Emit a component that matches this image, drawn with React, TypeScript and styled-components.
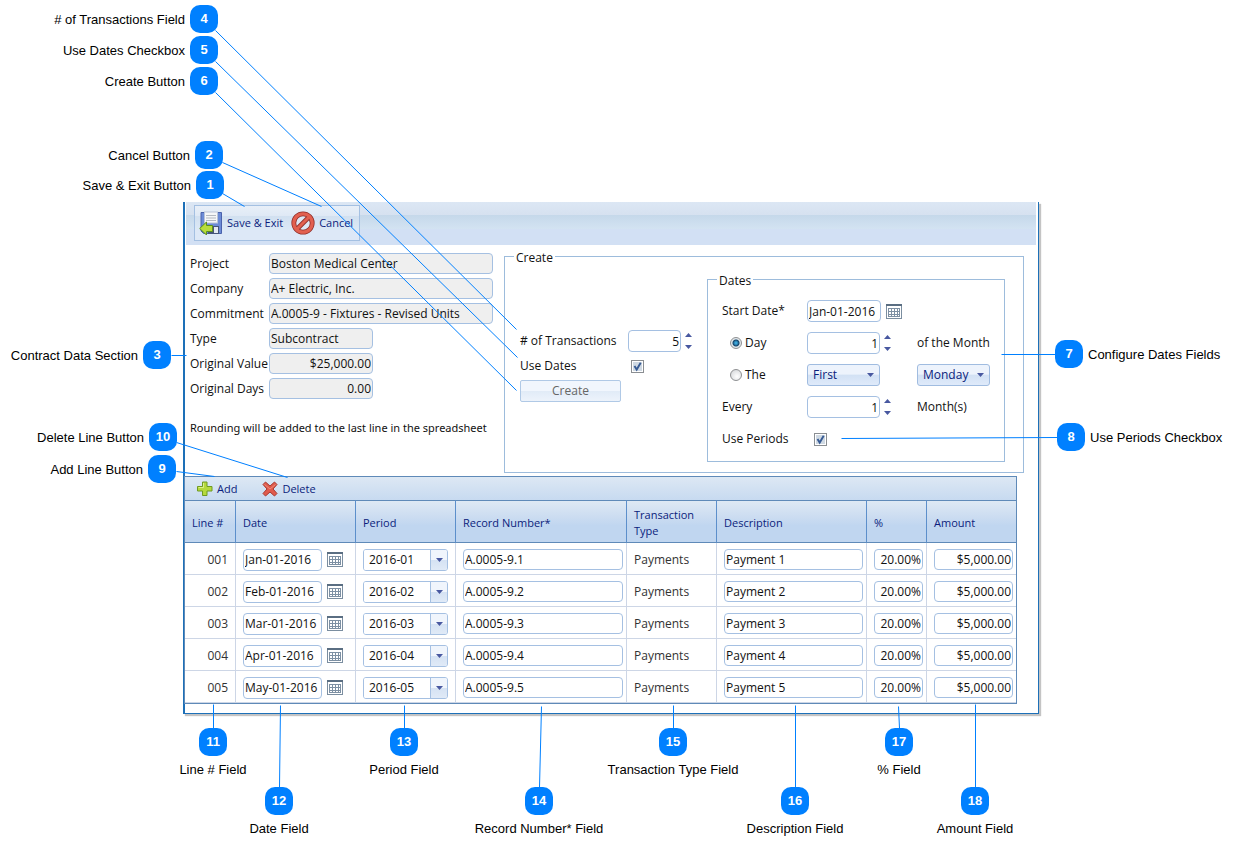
import React from "react";
import styled, { createGlobalStyle, css } from "styled-components";

const GlobalStyle = createGlobalStyle`
  *, *::before, *::after { box-sizing: border-box; }
  body {
    margin: 0;
    background: #fff;
    color: #111;
    font: 12px/16px "Open Sans", "Noto Sans", sans-serif;
  }
  button, input, select { font: inherit; color: inherit; margin: 0; }
`;

const Figure = styled.main`
  position: relative;
  max-width: 1240px;
  padding: 202px 193px 132px 183px;
`;

const Dialog = styled.section`
  padding: 0 2px 9px 0;
  border: solid #1d70b8;
  border-width: 0 1px 1px 2px;
  box-shadow: 2px 2px 1px #c4c4c4;
  margin-right: 1px;
`;

const CommandBar = styled.header`
  display: flex;
  height: 43px;
  margin-left: 1px;
  padding: 3px 8px;
  background: linear-gradient(#dce7f4 0, #d6e1f0 13px, #c5d8ea 13px, #d3e3f2 27px, #d2e0f4 27px);
`;

const CommandGroup = styled.div`
  display: flex;
  align-items: center;
  height: 36px;
  padding: 0 6px 0 4px;
  gap: 8px;
  border: 1px solid #a4c0e2;
  background: linear-gradient(#e8eff8 0, #dfe9f5 10px, #d1e0f0 10px, #dce9f6 24px, #dde8f7 24px);
`;

const ToolButton = styled.button`
  display: flex;
  align-items: center;
  gap: 4px;
  padding: 0;
  border: 0;
  background: none;
  color: #0b1d7c;
  font-size: 11px;
  white-space: nowrap;
`;

const Body = styled.div`
  display: flex;
  align-items: flex-start;
  padding: 2px 12px 3px 5px;
`;

const ContractData = styled.div`
  flex: 0 0 314px;
  min-width: 0;
  padding-top: 6px;
`;

const DataGrid = styled.div`
  display: grid;
  grid-template-columns: 79px 1fr;
  grid-auto-rows: 21px;
  row-gap: 4px;
  align-items: center;
  padding-right: 11px;
`;

const TextLabel = styled.label`
  white-space: nowrap;
`;

const Field = styled.input<{ $w?: number; $right?: boolean; $tall?: boolean }>`
  display: block;
  width: ${(p) => (p.$w ? `${p.$w}px` : "100%")};
  height: ${(p) => (p.$tall ? 22 : 21)}px;
  padding: 0 1px;
  border: 1px solid #a5c0e2;
  border-radius: 4px;
  background: #fff;
  outline: 0;
  text-align: ${(p) => (p.$right ? "right" : "left")};
  &:read-only { background: #efefef; }
`;

const Note = styled.p`
  margin: 21px 0 0;
  font-family: "Noto Sans", sans-serif;
  font-size: 11px;
  white-space: nowrap;
`;

const Group = styled.fieldset`
  min-width: 0;
  margin: 0;
  padding: 0;
  border: 1px solid #9dbcdc;
`;

const Legend = styled.legend`
  margin-left: 9px;
  padding: 4px 2px 0;
  line-height: 14px;
`;

const CreateGroup = styled(Group)`
  flex: 1;
  height: 226px;
`;

const CreateContent = styled.div`
  display: flex;
  align-items: flex-start;
  justify-content: space-between;
  padding: 5px 18px 0 15px;
`;

const CreateForm = styled.div`
  display: grid;
  grid-template-columns: 108px auto;
  grid-template-rows: 22px 28px 22px;
  align-items: center;
  padding-top: 60px;
`;

const DatesGroup = styled(Group)`
  width: 298px;
  height: 192px;
`;

const DatesGrid = styled.div`
  display: grid;
  grid-template-columns: 85px 110px 1fr;
  grid-auto-rows: 32px;
  align-items: center;
  padding: 7px 14px 0;
`;

const Inline = styled.div<{ $gap: number; $indent?: number }>`
  display: flex;
  align-items: center;
  gap: ${(p) => p.$gap}px;
  padding-left: ${(p) => p.$indent ?? 0}px;
`;

const Arrows = styled.span`
  display: flex;
  flex-direction: column;
  gap: 8px;
`;

const ArrowButton = styled.button`
  display: block;
  padding: 0;
  border: 0;
  background: none;
  line-height: 0;
`;

const CheckBox = styled.input`
  appearance: none;
  width: 13px;
  height: 13px;
  border: 1px solid #8a8e92;
  background: #fff
    url("data:image/svg+xml,%3Csvg xmlns='http://www.w3.org/2000/svg' viewBox='0 0 11 11'%3E%3Crect x='1' y='1' width='9' height='9' fill='%23cfd9e3'/%3E%3Cpath d='M2.5 5 L4.7 8.6 L8.7 1.8' fill='none' stroke='%23375b94' stroke-width='1.9'/%3E%3C/svg%3E");
`;

const Radio = styled.input`
  appearance: none;
  width: 12px;
  height: 12px;
  border: 1px solid #8e9092;
  border-radius: 50%;
  background: radial-gradient(circle at 60% 65%, #fff, #cfd2d5);
  &:checked {
    background: radial-gradient(circle, #3ba5d8 0 1px, #14446b 3px, #e2e7ea 4px);
  }
`;

const CreateButton = styled.button`
  grid-column: 1 / -1;
  justify-self: start;
  width: 101px;
  height: 22px;
  padding: 0;
  border: 1px solid #b0c9e6;
  border-radius: 2px;
  background: linear-gradient(#f1f6fd 48%, #e1ebf7 50%, #edf3fb);
  color: #666;
`;

const ChoiceFrame = styled.div`
  position: relative;
  display: inline-flex;
  width: 73px;
`;

const Choice = styled.select`
  appearance: none;
  width: 100%;
  height: 22px;
  padding: 0 5px;
  border: 1px solid #a0bce0;
  border-radius: 3px;
  background: linear-gradient(#edf3fc 46%, #d2e1f4 50%, #dfeafa);
  color: #0b1d7c;
`;

const ChoiceArrow = styled.span`
  position: absolute;
  right: 6px;
  top: 9px;
  line-height: 0;
  pointer-events: none;
`;

const Combo = styled.div`
  display: flex;
  width: 85px;
  height: 22px;
  border: 1px solid #a5c0e2;
  border-radius: 3px;
  overflow: hidden;
`;

const ComboText = styled.input`
  flex: 1;
  min-width: 0;
  padding: 0 5px;
  border: 0;
  outline: 0;
`;

const ComboButton = styled.button`
  display: flex;
  align-items: center;
  justify-content: center;
  width: 17px;
  padding: 0;
  border: 0;
  border-left: 1px solid #a5c0e2;
  background: linear-gradient(#f0f5fc 48%, #d5e2f3 50%, #e0eaf7);
`;

const IconButton = styled.button`
  padding: 0;
  border: 0;
  background: none;
  line-height: 0;
`;

const Panel = styled.div`
  margin: 0 19px 0 -1px;
  border: 1px solid #5f8ab8;
`;

const PanelBar = styled.div`
  display: flex;
  gap: 25px;
  height: 23px;
  padding: 0 12px;
  background: linear-gradient(#dde8f4, #c7daf0);
`;

const Table = styled.table`
  width: 100%;
  table-layout: fixed;
  border-collapse: separate;
  border-spacing: 0;
`;

const HeadCell = styled.th`
  height: 43px;
  padding: 2px 8px 0 7px;
  border-top: 1px solid #5f8ab8;
  border-bottom: 1px solid #5f8ab8;
  border-right: 1px solid #5c8fcb;
  background: linear-gradient(#dee9f4, #cbdcf1 40%, #c0d6f0 60%);
  color: #0b1d7c;
  font-size: 11px;
  font-weight: 400;
  text-align: left;
  &:last-child { border-right: 0; }
`;

const Cell = styled.td<{ $end?: boolean }>`
  height: 32px;
  padding: 2px 3px 0 7px;
  border-bottom: 1px solid #cdd6e6;
  border-right: 1px solid #cdd6e6;
  color: #333;
  ${(p) => p.$end && css`text-align: right; padding-right: 7px;`}
  &:last-child { border-right: 0; }
  input { color: #111; }
`;

const Leaders = styled.svg`
  position: absolute;
  left: 0;
  top: 0;
  width: 1233px;
  height: 846px;
  pointer-events: none;
`;

type Side = "left" | "right" | "below";

const CalloutBox = styled.div<{ $x: number; $y: number; $side: Side }>`
  position: absolute;
  left: ${(p) => p.$x}px;
  top: ${(p) => p.$y}px;
  display: flex;
  flex-direction: ${(p) => (p.$side === "left" ? "row-reverse" : p.$side === "right" ? "row" : "column")};
  align-items: center;
  gap: 5px;
  width: 28px;
  color: #000;
  font: 13px/18px "Liberation Sans", Arial, sans-serif;
  white-space: nowrap;
  span { padding-top: ${(p) => (p.$side === "below" ? 0 : 2)}px; }
`;

const Badge = styled.b`
  flex: none;
  width: 28px;
  height: 28px;
  border-radius: 10px;
  background: #0080ff;
  color: #fff;
  line-height: 28px;
  text-align: center;
`;

const callouts: [number, string, number, number, Side][] = [
  [4, "# of Transactions Field", 190, 5, "left"],
  [5, "Use Dates Checkbox", 190, 36, "left"],
  [6, "Create Button", 190, 67, "left"],
  [2, "Cancel Button", 195, 141, "left"],
  [1, "Save & Exit Button", 196, 171, "left"],
  [3, "Contract Data Section", 143, 341, "left"],
  [10, "Delete Line Button", 149, 423, "left"],
  [9, "Add Line Button", 148, 455, "left"],
  [7, "Configure Dates Fields", 1055, 340, "right"],
  [8, "Use Periods Checkbox", 1057, 423, "right"],
  [11, "Line # Field", 199, 728, "below"],
  [13, "Period Field", 390, 728, "below"],
  [15, "Transaction Type Field", 659, 728, "below"],
  [17, "% Field", 885, 728, "below"],
  [12, "Date Field", 265, 787, "below"],
  [14, "Record Number* Field", 525, 787, "below"],
  [16, "Description Field", 781, 787, "below"],
  [18, "Amount Field", 961, 787, "below"],
];

const leaders: [number, number, number, number][] = [
  [215, 30, 516, 329], [215, 61, 517, 357], [215, 92, 516, 390],
  [222, 162, 321, 206], [222, 193, 244, 206], [171, 355, 186, 355],
  [176, 442, 287, 477], [176, 471, 214, 476], [1001, 354, 1055, 354],
  [841, 438, 1057, 437], [213, 704, 213, 728], [280, 705, 279, 787],
  [404, 705, 404, 728], [541, 706, 539, 787], [673, 705, 673, 728],
  [795, 705, 795, 787], [898, 706, 899, 728], [975, 704, 975, 787],
];

const SaveIcon = () => (
  <svg width="24" height="24" viewBox="0 0 24 24" aria-hidden="true">
    <path d="M2 1.500h20.500v21H4.500L2 20z" fill="#6c8bd6" stroke="#4a62ac" />
    <rect x="5.500" y="1" width="13" height="11" fill="#f6f7f8" stroke="#b9c4d8" />
    <path d="M7 4.500h10M7 7h10M7 9.500h10" stroke="#b4b9c0" />
    <rect x="9" y="15" width="11" height="8" fill="#46557a" />
    <rect x="15" y="16" width="4" height="6" fill="#e4e9f2" />
    <path d="M0.700 17.500 7.500 11v3.500h6v6h-6V24z" fill="#b8dc3c" stroke="#5c8f1c" />
  </svg>
);

const CancelIcon = () => (
  <svg width="24" height="24" viewBox="0 0 24 24" aria-hidden="true">
    <circle cx="12" cy="12" r="9.200" fill="#dde8f5" stroke="#8e2d28" strokeWidth="4.800" />
    <path d="M5.500 18.500l13-13" stroke="#8e2d28" strokeWidth="4.600" />
    <circle cx="12" cy="12" r="9.200" fill="none" stroke="#e2604f" strokeWidth="3.200" />
    <path d="M5.500 18.500l13-13" stroke="#e2604f" strokeWidth="3" />
  </svg>
);

const AddIcon = () => (
  <svg width="16" height="16" viewBox="0 0 16 16" aria-hidden="true">
    <path d="M5.500 1h4.500v4.500h5v4.500h-5V14.500h-4.500V10H0.500v-4.500h5z" fill="#b5d93c" stroke="#6f9a22" />
    <path d="M6.500 2v4.500h-5" fill="none" stroke="#dcf08a" />
  </svg>
);

const DeleteIcon = () => (
  <svg width="16" height="16" viewBox="0 0 16 16" aria-hidden="true">
    <path d="M1 3.500 3.500 1 8 5l4.500-4L15 3.500 11 8l4 4.500-2.500 2.500L8 11l-4.500 4L1 12.500 5 8z" fill="#e05a4c" stroke="#a8392f" />
    <path d="M2.500 3.500 8 8l5.500-4.500" fill="none" stroke="#f08a78" />
  </svg>
);

const CalendarIcon = () => (
  <svg width="16" height="15" viewBox="0 0 16 15" aria-hidden="true">
    <rect x="0.500" y="0.500" width="15" height="14" fill="#fff" stroke="#7b8ea0" />
    <path d="M0 1h16" stroke="#5a6e82" strokeWidth="2" />
    <path d="M2 4.500h12M2 7.500h12M2 10.500h12M2 12.500h12M2.500 4v9M5.500 4v9M8.500 4v9M11.500 4v9M13.500 4v9" stroke="#7d90a3" />
  </svg>
);

const Triangle = ({ up = false }: { up?: boolean }) => (
  <svg width="7" height="4" viewBox="0 0 7 4" aria-hidden="true">
    <path d={up ? "M0 4h7L3.500 0z" : "M0 0h7L3.500 4z"} fill="#4858a0" />
  </svg>
);

const Spinner = ({ id, value, width }: { id: string; value: string; width: number }) => (
  <Inline $gap={4}>
    <Field id={id} $w={width} $right $tall defaultValue={value} />
    <Arrows>
      <ArrowButton aria-label="Increase"><Triangle up /></ArrowButton>
      <ArrowButton aria-label="Decrease"><Triangle /></ArrowButton>
    </Arrows>
  </Inline>
);

const DateField = ({ label, id, value, width }: { label?: string; id?: string; value: string; width: number }) => (
  <Inline $gap={5}>
    <Field id={id} aria-label={label} $w={width} $tall defaultValue={value} />
    <IconButton aria-label="Open calendar"><CalendarIcon /></IconButton>
  </Inline>
);

const DropDown = ({ label, value }: { label: string; value: string }) => (
  <ChoiceFrame>
    <Choice aria-label={label}><option>{value}</option></Choice>
    <ChoiceArrow><Triangle /></ChoiceArrow>
  </ChoiceFrame>
);

const contract = [
  { label: "Project", value: "Boston Medical Center" },
  { label: "Company", value: "A+ Electric, Inc." },
  { label: "Commitment", value: "A.0005-9 - Fixtures - Revised Units" },
  { label: "Type", value: "Subcontract", width: 104 },
  { label: "Original Value", value: "$25,000.00", width: 104, right: true },
  { label: "Original Days", value: "0.00", width: 104, right: true },
];

const columns: [string, number | undefined][] = [
  ["Line #", 51], ["Date", 120], ["Period", 100], ["Record Number*", 171],
  ["Transaction Type", 90], ["Description", undefined], ["%", 60], ["Amount", 89],
];

const months = ["Jan", "Feb", "Mar", "Apr", "May"];

export default function App() {
  return (
    <>
      <GlobalStyle />
      <Figure>
        <Dialog>
          <CommandBar>
            <CommandGroup>
              <ToolButton><SaveIcon />Save &amp; Exit</ToolButton>
              <ToolButton><CancelIcon />Cancel</ToolButton>
            </CommandGroup>
          </CommandBar>
          <Body>
            <ContractData>
              <DataGrid>
                {contract.map((f, i) => (
                  <React.Fragment key={f.label}>
                    <TextLabel htmlFor={`contract-${i}`}>{f.label}</TextLabel>
                    <Field id={`contract-${i}`} $w={f.width} $right={f.right} readOnly value={f.value} />
                  </React.Fragment>
                ))}
              </DataGrid>
              <Note>Rounding will be added to the last line in the spreadsheet</Note>
            </ContractData>
            <CreateGroup>
              <Legend>Create</Legend>
              <CreateContent>
                <CreateForm>
                  <TextLabel htmlFor="count"># of Transactions</TextLabel>
                  <Spinner id="count" value="5" width={53} />
                  <TextLabel htmlFor="use-dates">Use Dates</TextLabel>
                  <Inline $gap={0} $indent={3}>
                    <CheckBox id="use-dates" type="checkbox" defaultChecked />
                  </Inline>
                  <CreateButton disabled>Create</CreateButton>
                </CreateForm>
                <DatesGroup>
                  <Legend>Dates</Legend>
                  <DatesGrid>
                    <TextLabel htmlFor="start">Start Date*</TextLabel>
                    <DateField id="start" value="Jan-01-2016" width={74} />
                    <span />
                    <Inline $gap={3} $indent={8}>
                      <Radio id="day" type="radio" name="mode" defaultChecked />
                      <TextLabel htmlFor="day">Day</TextLabel>
                    </Inline>
                    <Spinner id="day-number" value="1" width={73} />
                    <TextLabel htmlFor="day-number">of the Month</TextLabel>
                    <Inline $gap={3} $indent={8}>
                      <Radio id="the" type="radio" name="mode" />
                      <TextLabel htmlFor="the">The</TextLabel>
                    </Inline>
                    <DropDown label="Ordinal" value="First" />
                    <DropDown label="Weekday" value="Monday" />
                    <TextLabel htmlFor="every">Every</TextLabel>
                    <Spinner id="every" value="1" width={73} />
                    <span>Month(s)</span>
                    <TextLabel htmlFor="use-periods">Use Periods</TextLabel>
                    <Inline $gap={0} $indent={7}>
                      <CheckBox id="use-periods" type="checkbox" defaultChecked />
                    </Inline>
                  </DatesGrid>
                </DatesGroup>
              </CreateContent>
            </CreateGroup>
          </Body>
          <Panel>
            <PanelBar>
              <ToolButton><AddIcon />Add</ToolButton>
              <ToolButton><DeleteIcon />Delete</ToolButton>
            </PanelBar>
            <Table>
              <colgroup>
                {columns.map(([name, width]) => <col key={name} width={width} />)}
              </colgroup>
              <thead>
                <tr>{columns.map(([name]) => <HeadCell key={name}>{name}</HeadCell>)}</tr>
              </thead>
              <tbody>
                {months.map((month, i) => {
                  const n = i + 1;
                  return (
                    <tr key={month}>
                      <Cell $end>{`00${n}`}</Cell>
                      <Cell><DateField label={`Date ${n}`} value={`${month}-01-2016`} width={79} /></Cell>
                      <Cell>
                        <Combo>
                          <ComboText aria-label={`Period ${n}`} defaultValue={`2016-0${n}`} />
                          <ComboButton aria-label="Choose period"><Triangle /></ComboButton>
                        </Combo>
                      </Cell>
                      <Cell><Field aria-label={`Record number ${n}`} defaultValue={`A.0005-9.${n}`} /></Cell>
                      <Cell>Payments</Cell>
                      <Cell><Field aria-label={`Description ${n}`} defaultValue={`Payment ${n}`} /></Cell>
                      <Cell><Field aria-label={`Percent ${n}`} $right defaultValue="20.00%" /></Cell>
                      <Cell><Field aria-label={`Amount ${n}`} $right defaultValue="$5,000.00" /></Cell>
                    </tr>
                  );
                })}
              </tbody>
            </Table>
          </Panel>
        </Dialog>
        <Leaders viewBox="0 0 1233 846" aria-hidden="true">
          {leaders.map(([x1, y1, x2, y2], i) => (
            <path key={i} d={`M${x1 + 0.5} ${y1 + 0.5}L${x2 + 0.5} ${y2 + 0.5}`} stroke="#0080ff" />
          ))}
        </Leaders>
        {callouts.map(([n, text, x, y, side]) => (
          <CalloutBox key={n} $x={x} $y={y} $side={side}>
            <Badge>{n}</Badge>
            <span>{text}</span>
          </CalloutBox>
        ))}
      </Figure>
    </>
  );
}
